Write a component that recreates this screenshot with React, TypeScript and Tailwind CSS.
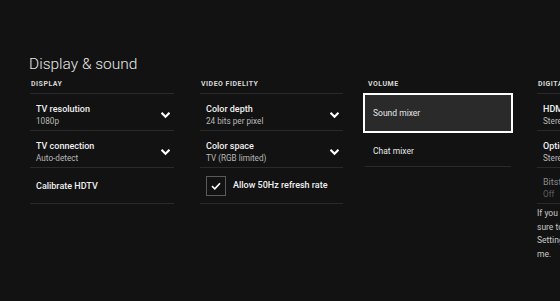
import React from "react";

const font = { fontFamily: 'Roboto, "Open Sans", sans-serif' };

function Chevron() {
  return (
    <svg width="9" height="7" viewBox="0 0 9 7" className="shrink-0">
      <path d="M1.3 1.5 L4.5 4.7 L7.7 1.5" fill="none" stroke="#ffffff" strokeWidth="2.1" strokeLinecap="square" />
    </svg>
  );
}

function Label({ children }: { children: React.ReactNode }) {
  return (
    <div className="h-[17px] flex items-center text-[7px] font-bold tracking-[0.07em] text-[#d8d8d8] pl-[1px]">
      {children}
    </div>
  );
}

function DropRow({ title, value }: { title: string; value: string }) {
  return (
    <div className="h-[37px] pt-[6px] border-b border-[#2a2a2a] flex items-center pl-[6px] pr-[4px]">
      <div className="flex-1 flex flex-col leading-[12px]">
        <span className="text-[9px] font-medium text-[#f0f0f0]">{title}</span>
        <span className="text-[8.2px] text-[#b8b8b8]">{value}</span>
      </div>
      <Chevron />
    </div>
  );
}

function InfoRow({ title, value, dim = false, h = "h-[37px]" }: { title: string; value: string; dim?: boolean; h?: string }) {
  return (
    <div className={`${h} pt-[5px] border-b border-[#2a2a2a] flex flex-col justify-center pl-[6px] leading-[12px]`}>
      <span className={`text-[9px] whitespace-nowrap ${dim ? "text-[#8a8a8a]" : "font-medium text-[#f0f0f0]"}`}>{title}</span>
      <span className={`text-[8.2px] whitespace-nowrap ${dim ? "text-[#5e5e5e]" : "text-[#b8b8b8]"}`}>{value}</span>
    </div>
  );
}

export default function App() {
  return (
    <div className="w-[560px] h-[301px] bg-[#121212] overflow-hidden" style={font}>
      <div className="pt-[54px] pl-[29px]">
        <h1 className="text-[15.5px] font-light text-[#e8e8e8] leading-[20px]">Display &amp; sound</h1>
        <div className="flex mt-[2px]">
          {/* Display */}
          <div className="w-[144px] shrink-0 ml-[1px]">
            <Label>DISPLAY</Label>
            <div className="border-t border-[#2a2a2a]">
              <DropRow title="TV resolution" value="1080p" />
              <DropRow title="TV connection" value="Auto-detect" />
              <div className="h-[36px] pt-[3px] border-b border-[#2a2a2a] flex items-center pl-[6px]">
                <span className="text-[9px] font-medium text-[#f0f0f0]">Calibrate HDTV</span>
              </div>
            </div>
          </div>
          {/* Video fidelity */}
          <div className="w-[143px] shrink-0 ml-[26px]">
            <Label>VIDEO FIDELITY</Label>
            <div className="border-t border-[#2a2a2a]">
              <DropRow title="Color depth" value="24 bits per pixel" />
              <DropRow title="Color space" value="TV (RGB limited)" />
              <div className="h-[36px] pt-[1px] border-b border-[#2a2a2a] flex items-center pl-[6px] gap-[7px]">
                <div className="w-[20px] h-[20px] border-[1.5px] border-[#5a5a5a] flex items-center justify-center">
                  <svg width="10" height="8" viewBox="0 0 10 8">
                    <path d="M1 4.2 L3.8 6.8 L9 1.2" fill="none" stroke="#ffffff" strokeWidth="1.6" />
                  </svg>
                </div>
                <span className="text-[9px] font-medium text-[#f0f0f0]">Allow 50Hz refresh rate</span>
              </div>
            </div>
          </div>
          {/* Volume */}
          <div className="w-[150px] shrink-0 ml-[20px]">
            <div className="pl-[4px]"><Label>VOLUME</Label></div>
            <div className="h-[40px] border-2 border-white bg-[#2a2a2a] flex items-center pl-[8px]">
              <span className="text-[8.5px] text-[#e6e6e6]">Sound mixer</span>
            </div>
            <div className="mx-[2px] h-[34px] pt-[3px] border-b border-[#2a2a2a] flex items-center pl-[8px]">
              <span className="text-[8.5px] text-[#e6e6e6]">Chat mixer</span>
            </div>
          </div>
          {/* Digital audio */}
          <div className="w-[143px] shrink-0 ml-[24px]">
            <Label>DIGITAL AUDIO</Label>
            <div className="border-t border-[#2a2a2a]">
              <InfoRow title="HDMI audio" value="Stereo uncompressed" />
              <InfoRow title="Optical audio" value="Stereo uncompressed" />
              <InfoRow title="Bitstream format" value="Off" dim h="h-[36px]" />
            </div>
            <p className="mt-[3px] text-[8.5px] leading-[13.5px] text-[#c8c8c8] whitespace-nowrap">
              If you change these settings, be
              <br />
              sure to check your audio device.
              <br />
              Settings may be changed by
              <br />
              me.
            </p>
          </div>
        </div>
      </div>
    </div>
  );
}
